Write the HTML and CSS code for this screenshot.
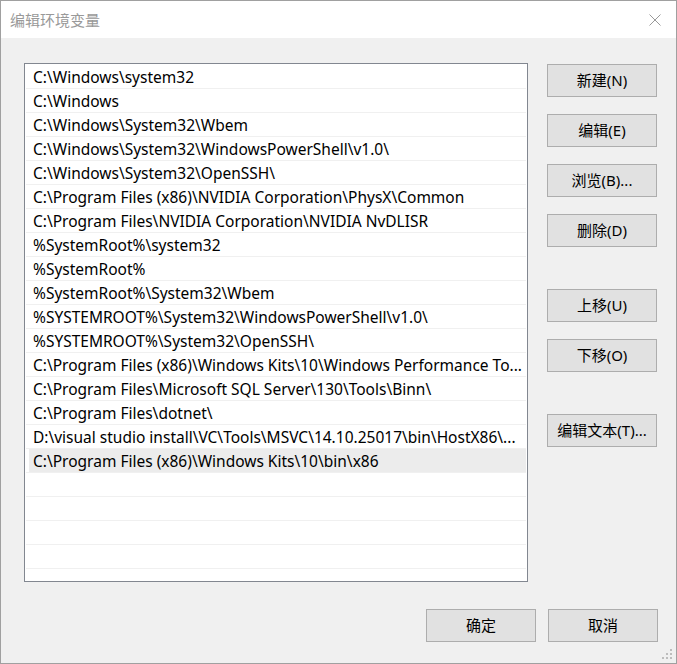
FILE: index.html
```html
<!DOCTYPE html>
<html lang="zh-CN">
<head>
  <meta charset="UTF-8">
  <title>编辑环境变量</title>
  <link rel="stylesheet" href="styles.css">
</head>
<body>
  <div class="window">
    <div class="titlebar">
      <span class="title">编辑环境变量</span>
      <svg class="close" width="12" height="12" viewBox="0 0 12 12">
        <path d="M0.5 0.5 L11.5 11.5 M11.5 0.5 L0.5 11.5" stroke="#999" stroke-width="1" fill="none"/>
      </svg>
    </div>

    <div class="dialog">
      <div class="main">
        <div class="list">
          <div class="row">C:\Windows\system32</div>
          <div class="row">C:\Windows</div>
          <div class="row">C:\Windows\System32\Wbem</div>
          <div class="row">C:\Windows\System32\WindowsPowerShell\v1.0\</div>
          <div class="row">C:\Windows\System32\OpenSSH\</div>
          <div class="row">C:\Program Files (x86)\NVIDIA Corporation\PhysX\Common</div>
          <div class="row">C:\Program Files\NVIDIA Corporation\NVIDIA NvDLISR</div>
          <div class="row">%SystemRoot%\system32</div>
          <div class="row">%SystemRoot%</div>
          <div class="row">%SystemRoot%\System32\Wbem</div>
          <div class="row">%SYSTEMROOT%\System32\WindowsPowerShell\v1.0\</div>
          <div class="row">%SYSTEMROOT%\System32\OpenSSH\</div>
          <div class="row">C:\Program Files (x86)\Windows Kits\10\Windows Performance To...</div>
          <div class="row">C:\Program Files\Microsoft SQL Server\130\Tools\Binn\</div>
          <div class="row">C:\Program Files\dotnet\</div>
          <div class="row">D:\visual studio install\VC\Tools\MSVC\14.10.25017\bin\HostX86\...</div>
          <div class="row selected">C:\Program Files (x86)\Windows Kits\10\bin\x86</div>
          <div class="row"></div>
          <div class="row"></div>
          <div class="row"></div>
          <div class="row"></div>
          <div class="row"></div>
        </div>

        <div class="side">
          <div class="group">
            <button>新建(N)</button>
            <button>编辑(E)</button>
            <button>浏览(B)...</button>
            <button>删除(D)</button>
          </div>
          <div class="group">
            <button>上移(U)</button>
            <button>下移(O)</button>
          </div>
          <div class="group">
            <button>编辑文本(T)...</button>
          </div>
        </div>
      </div>

      <div class="footer">
        <button>确定</button>
        <button>取消</button>
      </div>

      <svg class="grip" width="12" height="12" viewBox="0 0 12 12">
        <rect x="8" y="0" width="2" height="2" fill="#bdbdbd"/>
        <rect x="4" y="4" width="2" height="2" fill="#bdbdbd"/>
        <rect x="8" y="4" width="2" height="2" fill="#bdbdbd"/>
        <rect x="0" y="8" width="2" height="2" fill="#bdbdbd"/>
        <rect x="4" y="8" width="2" height="2" fill="#bdbdbd"/>
        <rect x="8" y="8" width="2" height="2" fill="#bdbdbd"/>
      </svg>
    </div>
  </div>
</body>
</html>
```

FILE: styles.css
```css
* {
  box-sizing: border-box;
}
body {
  margin: 0;
  background: #f0f0f0;
  font-family: "Noto Sans", "Noto Sans CJK SC", sans-serif;
  font-size: 15px;
  color: #000;
}
.window {
  width: 677px;
  height: 664px;
  border: 1px solid #a0a0a0;
  display: flex;
  flex-direction: column;
}
.titlebar {
  height: 37px;
  background: #fff;
  display: flex;
  align-items: center;
  justify-content: space-between;
  padding: 0 15px 0 9px;
}
.title {
  color: #999;
  font-size: 15px;
}
.close {
  display: block;
}
.dialog {
  flex: 1;
  position: relative;
  padding: 25px 18px 0 23px;
}
.main {
  display: flex;
  gap: 19px;
}
.list {
  width: 504px;
  height: 519px;
  border: 1px solid #828790;
  background: #fff;
  padding: 1px 1px 0;
  overflow: hidden;
}
.row {
  height: 24px;
  line-height: 24px;
  padding: 0 2px 0 7px;
  border-bottom: 1px solid #f0f0f0;
  font-size: 15.5px;
  white-space: nowrap;
  overflow: hidden;
  text-overflow: ellipsis;
}
.row.selected {
  background: linear-gradient(to right, transparent 3px, #ececec 3px);
}
.side {
  display: flex;
  flex-direction: column;
  gap: 42px;
  padding-top: 1px;
}
.group {
  display: flex;
  flex-direction: column;
  gap: 17px;
}
button {
  width: 110px;
  height: 33px;
  background: #e1e1e1;
  border: 1px solid #adadad;
  font-family: inherit;
  font-size: 15px;
  color: #000;
  padding: 0 0 3px;
}
.footer {
  display: flex;
  justify-content: flex-end;
  gap: 12px;
  margin-top: 27px;
}
.grip {
  position: absolute;
  right: 2px;
  bottom: 2px;
}
```
